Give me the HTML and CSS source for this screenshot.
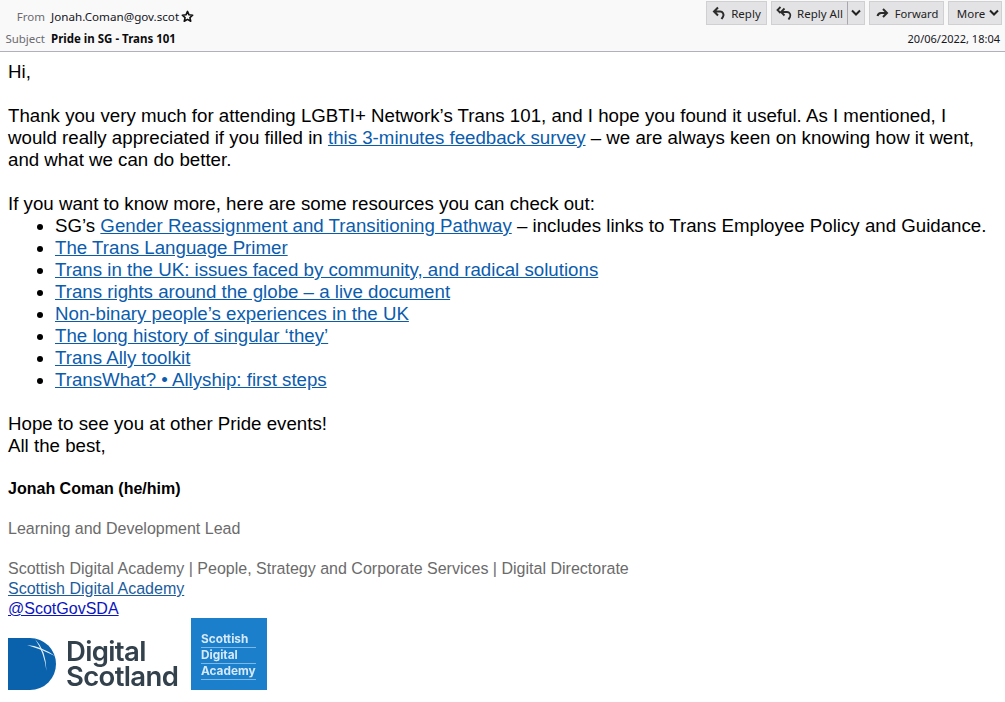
FILE: index.html
```html
<!DOCTYPE html>
<html lang="en">
<head>
<meta charset="utf-8">
<title>Pride in SG - Trans 101</title>
<link rel="stylesheet" href="styles.css">
</head>
<body>
<header class="msg-header">
  <div class="row row-top">
    <div class="field">
      <span class="label label-from">From</span>
      <span class="sender">Jonah.Coman@gov.scot</span>
      <svg class="star" viewBox="0 0 14 14" width="13" height="13"><path d="M7 1.500l1.600 3.700 4 .4-3 2.600.9 3.900L7 10.100l-3.500 2 .9-3.900-3-2.600 4-.4z" fill="none" stroke="#111" stroke-width="1.700" stroke-linejoin="round"/></svg>
    </div>
    <div class="actions">
      <button class="btn btn-reply"><svg class="ico" viewBox="0 0 14 14" width="14" height="14"><path d="M6 1.500L2 5.500l4 4M2.500 5.500H8a3.400 3.400 0 0 1 3 5.200L9.500 13" fill="none" stroke="#2b2b2b" stroke-width="2"/></svg>Reply</button>
      <div class="split">
        <button class="btn btn-all"><svg class="ico ico-all" viewBox="0 0 17 14" width="17" height="14"><path d="M4.500 1L1.500 4l3 3M8.500 2.500L5 6l3.500 3.500M6 6h5a3.400 3.400 0 0 1 3 5L12.500 13.500" fill="none" stroke="#2b2b2b" stroke-width="1.800"/></svg>Reply All</button>
        <button class="btn btn-drop"><svg viewBox="0 0 10 8" width="10" height="8"><path d="M1 1.500l4 4 4-4" fill="none" stroke="#222" stroke-width="2"/></svg></button>
      </div>
      <button class="btn btn-forward"><svg class="ico" viewBox="0 0 14 14" width="14" height="14"><path d="M8 3l4 4-4 4M11.500 7H6a4 4 0 0 0-3.500 3" fill="none" stroke="#2b2b2b" stroke-width="2"/></svg><span class="fw-text">Forward</span></button>
      <button class="btn btn-more"><span class="more-text">More</span><svg viewBox="0 0 10 8" width="10" height="8"><path d="M1 1.500l4 4 4-4" fill="none" stroke="#222" stroke-width="2"/></svg></button>
    </div>
  </div>
  <div class="row row-bottom">
    <div class="field">
      <span class="label">Subject</span>
      <strong class="subject">Pride in SG - Trans 101</strong>
    </div>
    <time class="date">20/06/2022, 18:04</time>
  </div>
</header>
<main class="body">
  <p>Hi,</p>
  <p class="gap">Thank you very much for attending LGBTI+ Network’s Trans 101, and I hope you found it useful. As I mentioned, I<br>would really appreciated if you filled in <a href="#">this 3-minutes feedback survey</a> – we are always keen on knowing how it went,<br>and what we can do better.</p>
  <p class="gap">If you want to know more, here are some resources you can check out:</p>
  <ul class="links">
    <li>SG’s <a href="#">Gender Reassignment and Transitioning Pathway</a> – includes links to Trans Employee Policy and Guidance.</li>
    <li><a href="#">The Trans Language Primer</a></li>
    <li><a href="#">Trans in the UK: issues faced by community, and radical solutions</a></li>
    <li><a href="#">Trans rights around the globe – a live document</a></li>
    <li><a href="#">Non-binary people’s experiences in the UK</a></li>
    <li><a href="#">The long history of singular ‘they’</a></li>
    <li><a href="#">Trans Ally toolkit</a></li>
    <li><a href="#">TransWhat? • Allyship: first steps</a></li>
  </ul>
  <p class="gap">Hope to see you at other Pride events!<br>All the best,</p>
  <div class="signature">
    <p class="sig-name">Jonah Coman (he/him)</p>
    <p class="sig-grey sig-gap">Learning and Development Lead</p>
    <p class="sig-grey sig-gap">Scottish Digital Academy | People, Strategy and Corporate Services | Digital Directorate</p>
    <p><a href="#" class="sig-link">Scottish Digital Academy</a></p>
    <p><a href="#" class="plain-link">@ScotGovSDA</a></p>
  </div>
  <div class="logos">
    <div class="logo-ds">
      <svg class="ds-mark" viewBox="0 0 48 52" width="48" height="52">
        <path d="M0 0H22a26 26 0 0 1 0 52H0z" fill="#0a62ad"/>
        <path d="M19 7Q33 8 47 18Q33 11 19 7z" fill="#e6f1f9"/>
        <path d="M27 1Q38 12 38.500 33Q36 14 27 1z" fill="#e6f1f9"/>
      </svg>
      <div class="ds-text"><span>Digital</span><span>Scotland</span></div>
    </div>
    <div class="logo-sda">
      <span>Scottish</span>
      <span>Digital</span>
      <span>Academy</span>
    </div>
  </div>
</main>
</body>
</html>
```
FILE: styles.css
```css
* { box-sizing: border-box; }
html, body { margin: 0; padding: 0; background: #fff; }
body { font-family: "Liberation Sans", Arial, sans-serif; color: #000; width: 1005px; height: 702px; overflow: hidden; }
p { margin: 0; }

.msg-header {
  height: 52px;
  background: #f9f9fa;
  border-bottom: 1px solid #b1b1b9;
  font-family: "Noto Sans", sans-serif;
  font-size: 11.500px;
}
.row { display: flex; justify-content: space-between; }
.row-top { height: 28px; padding: 1px 3px 0 0; align-items: flex-start; }
.row-bottom { height: 21px; padding: 0 3px 0 0; align-items: center; }
.field { display: flex; align-items: center; }
.row-top .field { height: 29px; padding-top: 1px; }
.label { width: 45px; text-align: right; color: #6b6b70; margin-right: 6px; }
.sender { color: #16161a; font-size: 11.650px; }
.star { margin-left: 2px; }
.subject { font-weight: 700; color: #0c0c0d; }
.date { color: #16161a; padding-right: 2px; font-size: 11px; }

.actions { display: flex; gap: 4px; }
.split { display: flex; }
.btn {
  height: 24px;
  display: flex;
  align-items: center;
  justify-content: center;
  gap: 5px;
  padding: 0;
  border: 1px solid #d0d0d3;
  background: #e3e3e5;
  color: #222;
  font: inherit;
}
.btn-reply { width: 61px; }
.btn-all { width: 77px; border-right: 1px solid #a8a8ac; gap: 4px; }
.btn-drop { width: 17px; border-left: 0; }
.btn-forward { width: 75px; gap: 6px; }
.btn-more { width: 54px; gap: 4px; padding-left: 6px; }
.fw-text { font-size: 11.200px; }

.body { padding: 9px 12px 0 8px; font-size: 18.690px; line-height: 22px; }
.body a { color: #0b5cad; text-decoration: underline; }
.gap { margin-top: 22px; }
.links { margin: 0; padding: 0 0 0 47px; }

.signature { margin-top: 21px; font-size: 16.030px; line-height: 20px; }
.sig-name { font-weight: 700; }
.sig-grey { color: #6b6b6b; }
.sig-gap { margin-top: 20px; }
.body .sig-link { color: #1a5c9e; }
.body .plain-link { color: #0a14c0; }

.logos { display: flex; align-items: flex-end; gap: 11px; height: 72px; }
.logo-ds { display: flex; align-items: center; width: 172px; height: 52px; color: #33414d; gap: 10px; filter: blur(0.3px); }
.ds-mark { flex-shrink: 0; }
.ds-text {
  display: flex;
  flex-direction: column;
  font-family: "Inter", sans-serif;
  font-weight: 600;
  font-size: 27.500px;
  line-height: 25px;
  letter-spacing: -0.650px;
}
.logo-sda {
  width: 76px;
  height: 72px;
  background: #1b7fcc;
  color: #d6e9f8;
  font-family: "Inter", sans-serif;
  font-weight: 700;
  font-size: 11.800px;
  line-height: 15px;
  padding: 14px 11px 0 10px;
  display: flex;
  flex-direction: column;
  filter: blur(0.3px);
}
.logo-sda span { border-bottom: 1px solid #7ab8e6; }
```
